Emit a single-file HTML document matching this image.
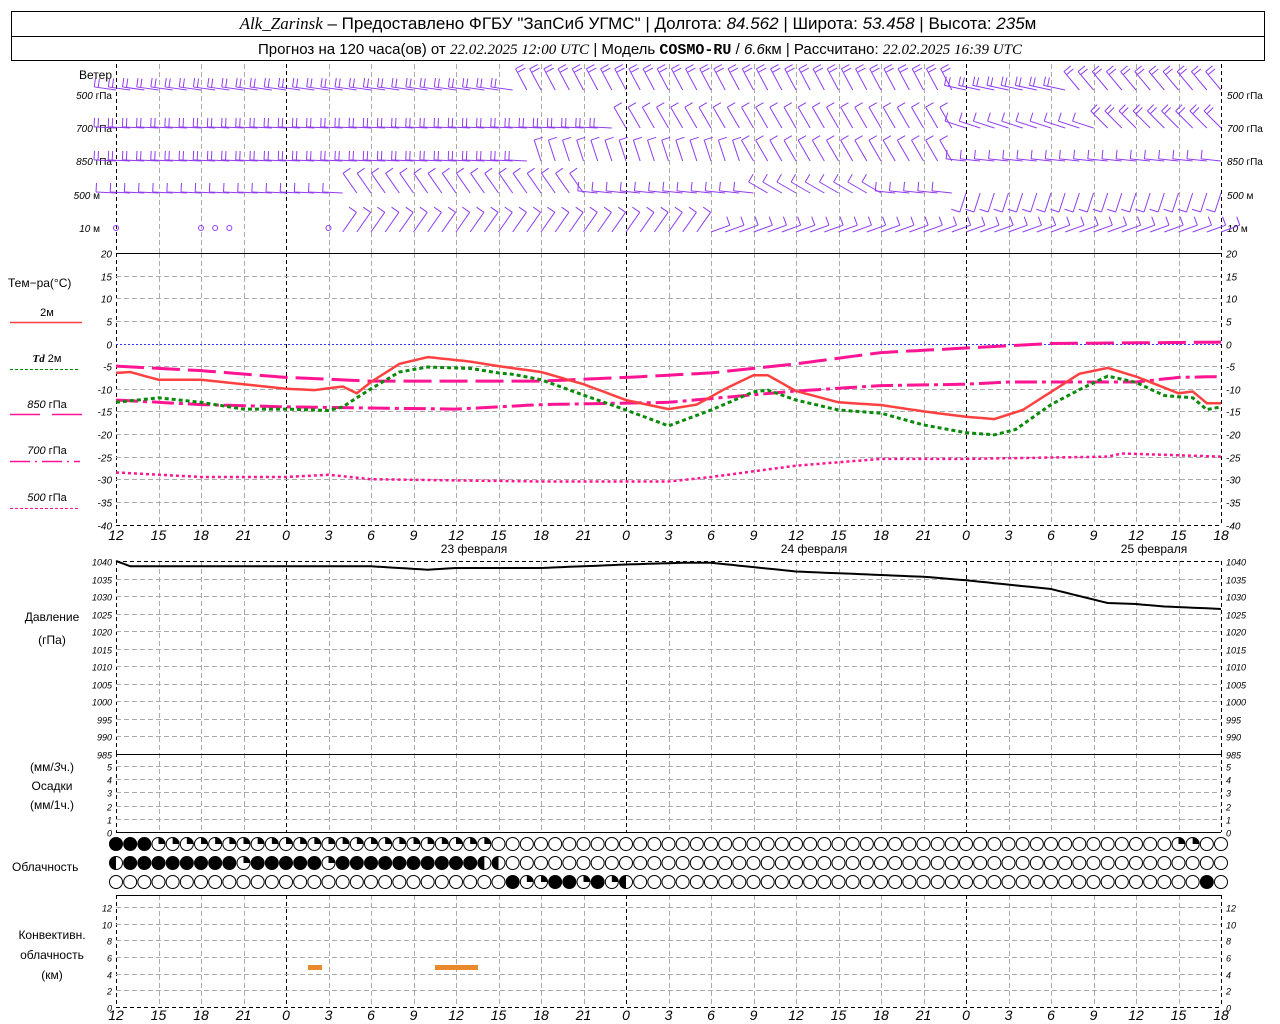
<!DOCTYPE html>
<html><head><meta charset="utf-8">
<style>
html,body{margin:0;padding:0;background:#fff;width:1280px;height:1024px;overflow:hidden}
svg{display:block}
text{font-family:"Liberation Sans",sans-serif;fill:#000}
.it{font-style:italic}
.ax{font-size:10px;font-style:italic}
.lb{font-size:12px}
</style></head><body>
<svg id="s" width="1280" height="1024" viewBox="0 0 1280 1024" xmlns="http://www.w3.org/2000/svg">
<rect x="11.5" y="11.5" width="1253" height="49" fill="none" stroke="#000"/>
<line x1="11" y1="36.5" x2="1265" y2="36.5" stroke="#000"/>
<text x="638" y="29" text-anchor="middle" font-size="17"><tspan class="it" font-family="Liberation Serif">Alk_Zarinsk</tspan> – Предоставлено ФГБУ "ЗапСиб УГМС" | Долгота: <tspan class="it">84.562</tspan> | Широта: <tspan class="it">53.458</tspan> | Высота: <tspan class="it">235</tspan>м</text>
<text x="640" y="54" text-anchor="middle" font-size="15">Прогноз на 120 часа(ов) от <tspan class="it" font-family="Liberation Serif">22.02.2025 12:00 UTC</tspan> | Модель <tspan font-family="Liberation Mono" font-weight="bold">COSMO-RU</tspan> / <tspan class="it">6.6</tspan>км | Рассчитано: <tspan class="it" font-family="Liberation Serif">22.02.2025 16:39 UTC</tspan></text>

<g class="lb">
<text x="112" y="79" text-anchor="end" class="lb">Ветер</text>
<text x="112" y="99" text-anchor="end" class="ax">500 <tspan font-style="normal">гПа</tspan></text>
<text x="112" y="132" text-anchor="end" class="ax">700 <tspan font-style="normal">гПа</tspan></text>
<text x="112" y="165" text-anchor="end" class="ax">850 <tspan font-style="normal">гПа</tspan></text>
<text x="100" y="199" text-anchor="end" class="ax">500 <tspan font-style="normal">м</tspan></text>
<text x="100" y="232" text-anchor="end" class="ax">10 <tspan font-style="normal">  м</tspan></text>
<text x="1227" y="99" class="ax">500 <tspan font-style="normal">гПа</tspan></text>
<text x="1227" y="132" class="ax">700 <tspan font-style="normal">гПа</tspan></text>
<text x="1227" y="165" class="ax">850 <tspan font-style="normal">гПа</tspan></text>
<text x="1227" y="199" class="ax">500 <tspan font-style="normal">м</tspan></text>
<text x="1227" y="232" class="ax">10 <tspan font-style="normal">  м</tspan></text>

<text x="8" y="287" class="lb">Тем−ра(°С)</text>
<text x="47" y="316" text-anchor="middle" font-size="11">2м</text>
<text x="47" y="362" text-anchor="middle" font-size="11"><tspan class="it" font-weight="bold" font-family="Liberation Serif">Td</tspan>  2м</text>
<text x="47" y="408" text-anchor="middle" font-size="11"><tspan class="it">850</tspan>  гПа</text>
<text x="47" y="454" text-anchor="middle" font-size="11"><tspan class="it">700</tspan>  гПа</text>
<text x="47" y="501" text-anchor="middle" font-size="11"><tspan class="it">500</tspan>  гПа</text>

<text x="52" y="621" text-anchor="middle" class="lb">Давление</text>
<text x="52" y="644" text-anchor="middle" class="lb">(гПа)</text>
<text x="52" y="771" text-anchor="middle" class="lb">(мм/<tspan class="it">3</tspan>ч.)</text>
<text x="52" y="790" text-anchor="middle" class="lb">Осадки</text>
<text x="52" y="809" text-anchor="middle" class="lb">(мм/1ч.)</text>
<text x="12" y="871" class="lb">Облачность</text>
<text x="52" y="939" text-anchor="middle" class="lb">Конвективн.</text>
<text x="52" y="959" text-anchor="middle" class="lb">облачность</text>
<text x="52" y="979" text-anchor="middle" class="lb">(км)</text>

<text x="474" y="553" text-anchor="middle" class="lb">23 февраля</text>
<text x="814" y="553" text-anchor="middle" class="lb">24 февраля</text>
<text x="1154" y="553" text-anchor="middle" class="lb">25 февраля</text>
</g>
<g id="g"></g>
</svg>
<script>
var NS="http://www.w3.org/2000/svg",G=document.getElementById("g");
function el(n,a,p){var e=document.createElementNS(NS,n);for(var k in a)e.setAttribute(k,a[k]);(p||G).appendChild(e);return e;}
function ln(x1,y1,x2,y2,c,w,d){var a={x1:x1,y1:y1,x2:x2,y2:y2,stroke:c,"stroke-width":w||1};if(d)a["stroke-dasharray"]=d;return el("line",a);}
function tx(x,y,s,anc,sz){var e=el("text",{x:x,y:y,"text-anchor":anc||"start","font-size":sz||10,"font-style":"italic"});e.textContent=s;}
var X0=116,X1=1221,DH=(X1-X0)/78;function X(h){return X0+h*DH;}
var panels=[[64,253],[253,525],[561,753],[753,832],[895,1007]];
panels.forEach(function(p){for(var i=0;i<=26;i++){var x=Math.round(X(i*3))+.5;var h=(i*3+12)%24;
 if(i==0||i==26||h==0)ln(x,p[0],x,p[1],"#000",1,"4,3");else ln(x,p[0],x,p[1],"#aaa",1,"5,3");}});
function YT(t){return 343.5-4.525*t;}
for(var t=-40;t<=20;t+=5){var y=Math.round(YT(t))+.5;if(t==20)ln(X0,y,X1,y,"#000",1);else if(t==-40)ln(X0,y,X1,y,"#000",1,"4,3");else if(t==0)ln(X0,y,X1,y,"#33f",1,"2,2");else ln(X0,y,X1,y,"#aaa",1,"5,3");
 tx(112,y+4,""+t,"end");tx(1226,y+4,""+t);}
function YP(p){return 561+(1040-p)*3.5;}
for(var p=985;p<=1040;p+=5){var y=Math.round(YP(p))+.5;if(p==985)ln(X0,y,X1,y,"#000",1);else if(p==1040)ln(X0,y,X1,y,"#000",1,"4,3");else ln(X0,y,X1,y,"#aaa",1,"5,3");
 tx(112,y+4,""+p,"end",9);tx(1226,y+4,""+p,"start",9);}
for(var i=0;i<=5;i++){var y=Math.round(832-i*13.2)+.5;if(i==0)ln(X0,y,X1,y,"#000",1);else ln(X0,y,X1,y,"#aaa",1,"5,3");tx(112,y+4,""+i,"end",9);tx(1226,y+4,""+i,"start",9);}
ln(X0,895.5,X1,895.5,"#000",1);
for(var i=0;i<=12;i+=2){var y=Math.round(1007-i*8.33)+.5;if(i==0)ln(X0,y,X1,y,"#000",1,"4,3");else ln(X0,y,X1,y,"#aaa",1,"5,3");tx(112,y+4,""+i,"end",9);tx(1226,y+4,""+i,"start",9);}
for(var i=0;i<=26;i++){var h=(i*3+12)%24;tx(X(i*3),540,""+h,"middle",14);tx(X(i*3),1020,""+h,"middle",14);}
function interp(pts,h){for(var i=0;i<pts.length-1;i++){if(h>=pts[i][0]&&h<=pts[i+1][0]){var f=(h-pts[i][0])/(pts[i+1][0]-pts[i][0]);return pts[i][1]+f*(pts[i+1][1]-pts[i][1]);}}return pts[pts.length-1][1];}
function series(pts,fy,c,w,d){var s="";for(var h=0;h<=78;h+=0.5){s+=(s?"L":"M")+X(h).toFixed(1)+","+fy(interp(pts,h)).toFixed(1);}var a={d:s,fill:"none",stroke:c,"stroke-width":w};if(d)a["stroke-dasharray"]=d;el("path",a);}
var red=[[0,-6.5],[1,-6.3],[3,-8],[6,-8],[9,-9],[12,-10],[14,-10.3],[16,-9.5],[17,-11],[18,-8.5],[20,-4.5],[22,-3],[25,-4],[27,-5],[30,-6.3],[33,-9],[36,-12.5],[39,-14.5],[41,-13.5],[43,-10],[45,-7],[46,-7],[48,-10.5],[51,-13],[54,-13.6],[57,-15],[60,-16.2],[62,-16.7],[64,-14.7],[66,-10.7],[68,-6.7],[70,-5.4],[72,-7.3],[75,-11],[76,-10.6],[77,-13.2],[78,-13.2]];
var grn=[[0,-13],[3,-12],[6,-13],[9,-14.5],[12,-14.5],[15,-14.8],[16,-14],[18,-10],[20,-6.3],[22,-5.2],[25,-5.5],[27,-6.5],[28,-6.8],[30,-8],[33,-11.4],[36,-14.7],[39,-18.2],[42,-14.7],[45,-10.7],[46,-10.3],[48,-12.5],[51,-14.7],[54,-15.4],[57,-18],[60,-19.7],[62,-20.2],[63.5,-19],[64.5,-16.8],[66,-13.5],[68,-10.2],[70,-7.2],[72,-8.6],[74,-11.5],[76,-12],[77,-14.6],[78,-14]];
var p850=[[0,-12.5],[6,-13.5],[12,-14],[24,-14.5],[30,-13.5],[39,-13],[48,-10.5],[54,-9.3],[60,-9],[63,-8.5],[72,-8.5],[75,-7.5],[78,-7.3]];
var p700=[[0,-5],[6,-6],[12,-7.5],[18,-8.3],[30,-8.3],[36,-7.5],[42,-6.5],[48,-4.5],[54,-2],[60,-1],[66,0],[78,0.3]];
var p500=[[0,-28.5],[6,-29.5],[12,-29.5],[15,-29],[18,-30],[30,-30.5],[39,-30.5],[42,-29.5],[48,-27],[54,-25.5],[60,-25.5],[70,-25],[71,-24.3],[78,-25]];
series(p500,YT,"#ff1493",2.5,"3,3");
series(p700,YT,"#ff1493",3,"28,8");
series(p850,YT,"#ff1493",3,"22,5,4,5");
series(grn,YT,"#0a8a0a",3,"4,3");
series(red,YT,"#ff4040",2.5);
var pr=[[0,1040],[1,1038.5],[6,1038.5],[12,1038.5],[18,1038.5],[22,1037.5],[24,1038],[30,1038],[36,1039],[40,1039.5],[42,1039.5],[48,1037],[51,1036.5],[57,1035.5],[60,1034.5],[66,1032],[70,1028],[72,1027.7],[74,1027],[78,1026.3]];
series(pr,YP,"#000",2);
ln(10,322.5,82,322.5,"#ff4040",1.5);ln(10,369.5,80,369.5,"#0a8a0a",1,"3,2");
ln(10,414.5,40,414.5,"#ff1493",1.5);ln(52,414.5,82,414.5,"#ff1493",1.5);
ln(10,461.5,80,461.5,"#ff1493",1.5,"20,5,2,5");ln(10,508.5,80,508.5,"#ff1493",1,"3,2");
el("rect",{x:308,y:965,width:14,height:5,fill:"#e8892c"});el("rect",{x:435,y:965,width:43,height:5,fill:"#e8892c"});
var rows=[
"fffppppppppppppppppppppppppoooooooooooooooooooooooooooooooooooooooooooooooopp",
"hffffffffpfffffpffffffffffhhooooooooooooooooooooooooooooooooooooooooooooooooo",
"oooooooooooooooooooooooooooofppffpfphoooooooooooooooooooooooooooooooooooooooof"];
var ry=[844,863,882];
rows.forEach(function(r,ri){for(var h=0;h<=78;h++){var c=r[h]||"o",x=X(h),y=ry[ri];
 el("circle",{cx:x,cy:y,r:6.5,fill:c=="f"?"#000":"#fff",stroke:"#000","stroke-width":1});
 if(c=="h")el("path",{d:"M"+x+","+(y-6.5)+"A6.5,6.5 0 0 0 "+x+","+(y+6.5)+"Z",fill:"#000"});
 if(c=="p")el("path",{d:"M"+x+","+y+"L"+x+","+(y-6.5)+"A6.5,6.5 0 0 1 "+(x+6.5)+","+y+"Z",fill:"#000"});
}});
var col="#8f3cf0";
var wr=[
 {y:90,s:[[0,29,8,2,22],[29,60,62,2,24],[60,68,12,2,22],[68,79,50,2,24]]},
 {y:128,s:[[0,36,3,2,22],[36,60,60,1,24],[60,70,18,1,22],[70,79,45,2,24]]},
 {y:161,s:[[0,30,3,2,22],[30,45,72,1,22],[45,60,60,1,24],[60,79,6,1,20]]},
 {y:193,s:[[0,17,3,1,20],[17,34,55,1,24],[34,46,6,1,20],[46,55,30,1,22],[55,60,6,1,20],[60,79,-72,1,20]]},
 {y:232,s:[[0,16,0,0,0],[16,42,125,1,24],[42,79,160,1,20]]}];
wr.forEach(function(r){r.s.forEach(function(sg){for(var h=sg[0];h<sg[1]&&h<=78;h++){var x=X(h),y=r.y;
 if(sg[3]==0){if(h==0||h==6||h==7||h==8||h==15||h==16)el("circle",{cx:x,cy:y-4,r:2.5,fill:"none",stroke:col});continue;}
 var a=sg[2]*Math.PI/180,L=sg[4];var ex=x-L*Math.cos(a),ey=y-L*Math.sin(a);
 ln(x,y,ex,ey,col,1);
 var ux=Math.cos(a),uy=Math.sin(a),px=-uy,py=ux;
 if(py>0){px=-px;py=-py;}
 for(var k=0;k<sg[3];k++){var bx=ex+ux*k*4,by=ey+uy*k*4;ln(bx,by,bx+px*9,by+py*9,col,1);}
}});});
</script>
</body></html>
